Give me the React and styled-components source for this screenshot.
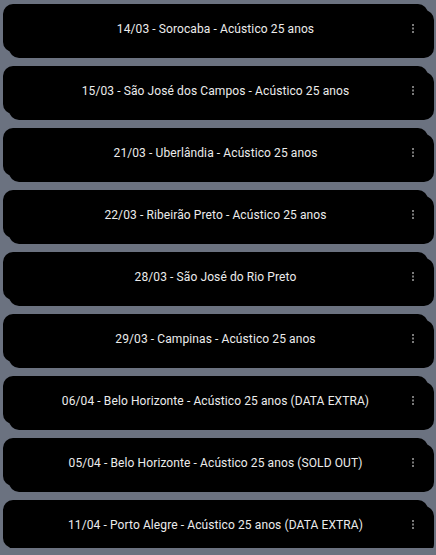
import React from 'react';
import styled, { createGlobalStyle } from 'styled-components';

const GlobalStyle = createGlobalStyle`
  html, body {
    margin: 0;
    padding: 0;
    background: #6b7280;
  }
  body {
    font-family: Roboto, "Noto Sans", "Liberation Sans", sans-serif;
    overflow: hidden;
  }
`;

const List = styled.ul`
  list-style: none;
  margin: 0;
  padding: 4px 8px 0 3px;
  display: flex;
  flex-direction: column;
  gap: 14px;
`;

const Card = styled.li`
  position: relative;
  height: 48px;
  width: 425px;
  box-sizing: border-box;
  background: #000;
  border-radius: 10px;
  box-shadow: 6px 6px 0 #000;
  display: flex;
  align-items: center;
  justify-content: center;
  padding: 2px 32px 0;
`;

const Title = styled.span`
  color: #ececec;
  font-size: 12px;
  letter-spacing: 0.1px;
  white-space: nowrap;
`;

const MenuButton = styled.button`
  position: absolute;
  right: 9px;
  top: 50%;
  transform: translateY(-50%);
  width: 12px;
  height: 16px;
  padding: 0;
  border: 0;
  background: transparent;
  display: flex;
  align-items: center;
  justify-content: center;
  color: #7a7a7a;
`;

const shows = [
  '14/03 - Sorocaba - Acústico 25 anos',
  '15/03 - São José dos Campos - Acústico 25 anos',
  '21/03 - Uberlândia - Acústico 25 anos',
  '22/03 - Ribeirão Preto - Acústico 25 anos',
  '28/03 - São José do Rio Preto',
  '29/03 - Campinas - Acústico 25 anos',
  '06/04 - Belo Horizonte - Acústico 25 anos (DATA EXTRA)',
  '05/04 - Belo Horizonte - Acústico 25 anos (SOLD OUT)',
  '11/04 - Porto Alegre - Acústico 25 anos (DATA EXTRA)',
];

const Dots = () => (
  <svg width="4" height="9" viewBox="0 0 4 9">
    <rect x="1" y="0" width="2" height="2" fill="currentColor" />
    <rect x="1" y="3.5" width="2" height="2" fill="currentColor" />
    <rect x="1" y="7" width="2" height="2" fill="currentColor" />
  </svg>
);

const App = () => (
  <>
    <GlobalStyle />
    <List>
      {shows.map((s) => (
        <Card key={s}>
          <Title>{s}</Title>
          <MenuButton aria-label="Mais opções">
            <Dots />
          </MenuButton>
        </Card>
      ))}
    </List>
  </>
);

export default App;
